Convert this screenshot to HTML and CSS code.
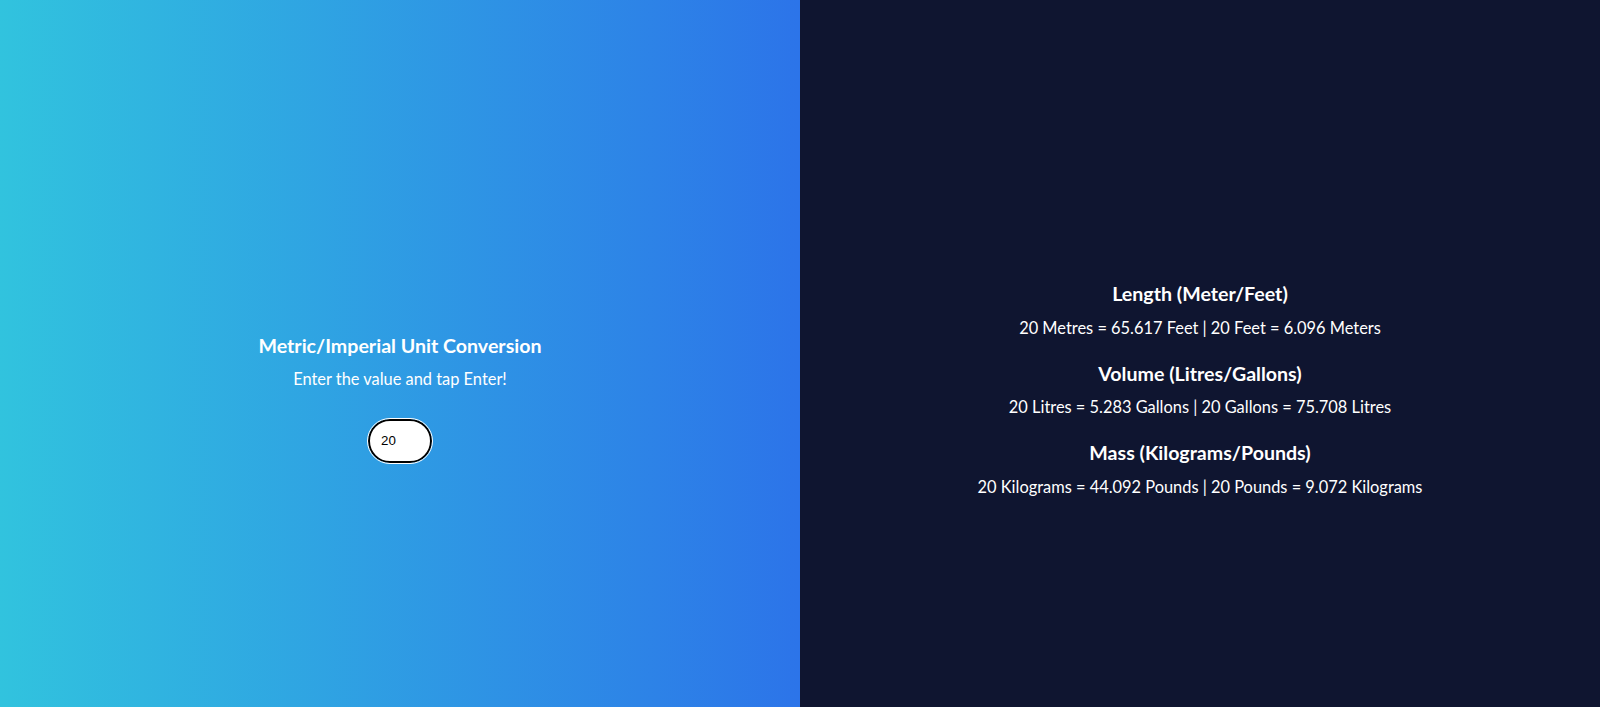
FILE: index.html
```html
<!DOCTYPE html>
<html lang="en">
<head>
<meta charset="utf-8">
<title>Metric/Imperial Unit Conversion</title>
<link rel="stylesheet" href="styles.css">
</head>
<body>
<main class="app">
  <section class="input-side">
    <div class="input-block">
      <h1 class="title">Metric/Imperial Unit Conversion</h1>
      <p class="subtitle">Enter the value and tap Enter!</p>
      <input class="value-input" type="text" value="20" autofocus>
    </div>
  </section>
  <section class="output-side">
    <div class="output-block">
      <h2 class="unit-title">Length (Meter/Feet)</h2>
      <p class="unit-line">20 Metres = 65.617 Feet | 20 Feet = 6.096 Meters</p>
      <h2 class="unit-title">Volume (Litres/Gallons)</h2>
      <p class="unit-line">20 Litres = 5.283 Gallons | 20 Gallons = 75.708 Litres</p>
      <h2 class="unit-title">Mass (Kilograms/Pounds)</h2>
      <p class="unit-line">20 Kilograms = 44.092 Pounds | 20 Pounds = 9.072 Kilograms</p>
    </div>
  </section>
</main>
</body>
</html>
```
FILE: styles.css
```css
html, body {
  margin: 0;
  padding: 0;
  height: 100%;
}
body {
  font-family: Lato, "Noto Sans", sans-serif;
  color: #ffffff;
}
.app {
  display: flex;
  width: 100%;
  height: 100vh;
}
.input-side {
  flex: 1 1 50%;
  display: flex;
  align-items: center;
  justify-content: center;
  background: linear-gradient(to right, #31c3de, #2c74e9);
  padding-top: 90px;
  box-sizing: border-box;
}
.input-block {
  display: flex;
  flex-direction: column;
  align-items: center;
}
.title {
  margin: 0;
  font-size: 19.6px;
  line-height: 23.5px;
  font-weight: 700;
}
.subtitle {
  margin: 11px 0 0;
  font-size: 16.4px;
  line-height: 20px;
}
.value-input {
  margin-top: 30px;
  width: 40px;
  height: 38px;
  padding: 1px 9px 1px 11px;
  border: 2px solid #000;
  border-radius: 22px;
  outline: 1px solid #fff;
  background: #fff;
  font-family: Arial, "Liberation Sans", sans-serif;
  font-size: 13.33px;
  color: #000;
}
.output-side {
  flex: 1 1 50%;
  display: flex;
  align-items: center;
  justify-content: center;
  background: #0f1530;
  padding-top: 72px;
  box-sizing: border-box;
}
.output-block {
  display: flex;
  flex-direction: column;
  align-items: center;
}
.unit-title {
  margin: 0;
  font-size: 19.6px;
  line-height: 23.5px;
  font-weight: 700;
}
.unit-title + .unit-line {
  margin-top: 12px;
}
.unit-line {
  margin: 0 0 24px;
  font-size: 16.4px;
  line-height: 20px;
}
.unit-line:last-child {
  margin-bottom: 0;
}
```
